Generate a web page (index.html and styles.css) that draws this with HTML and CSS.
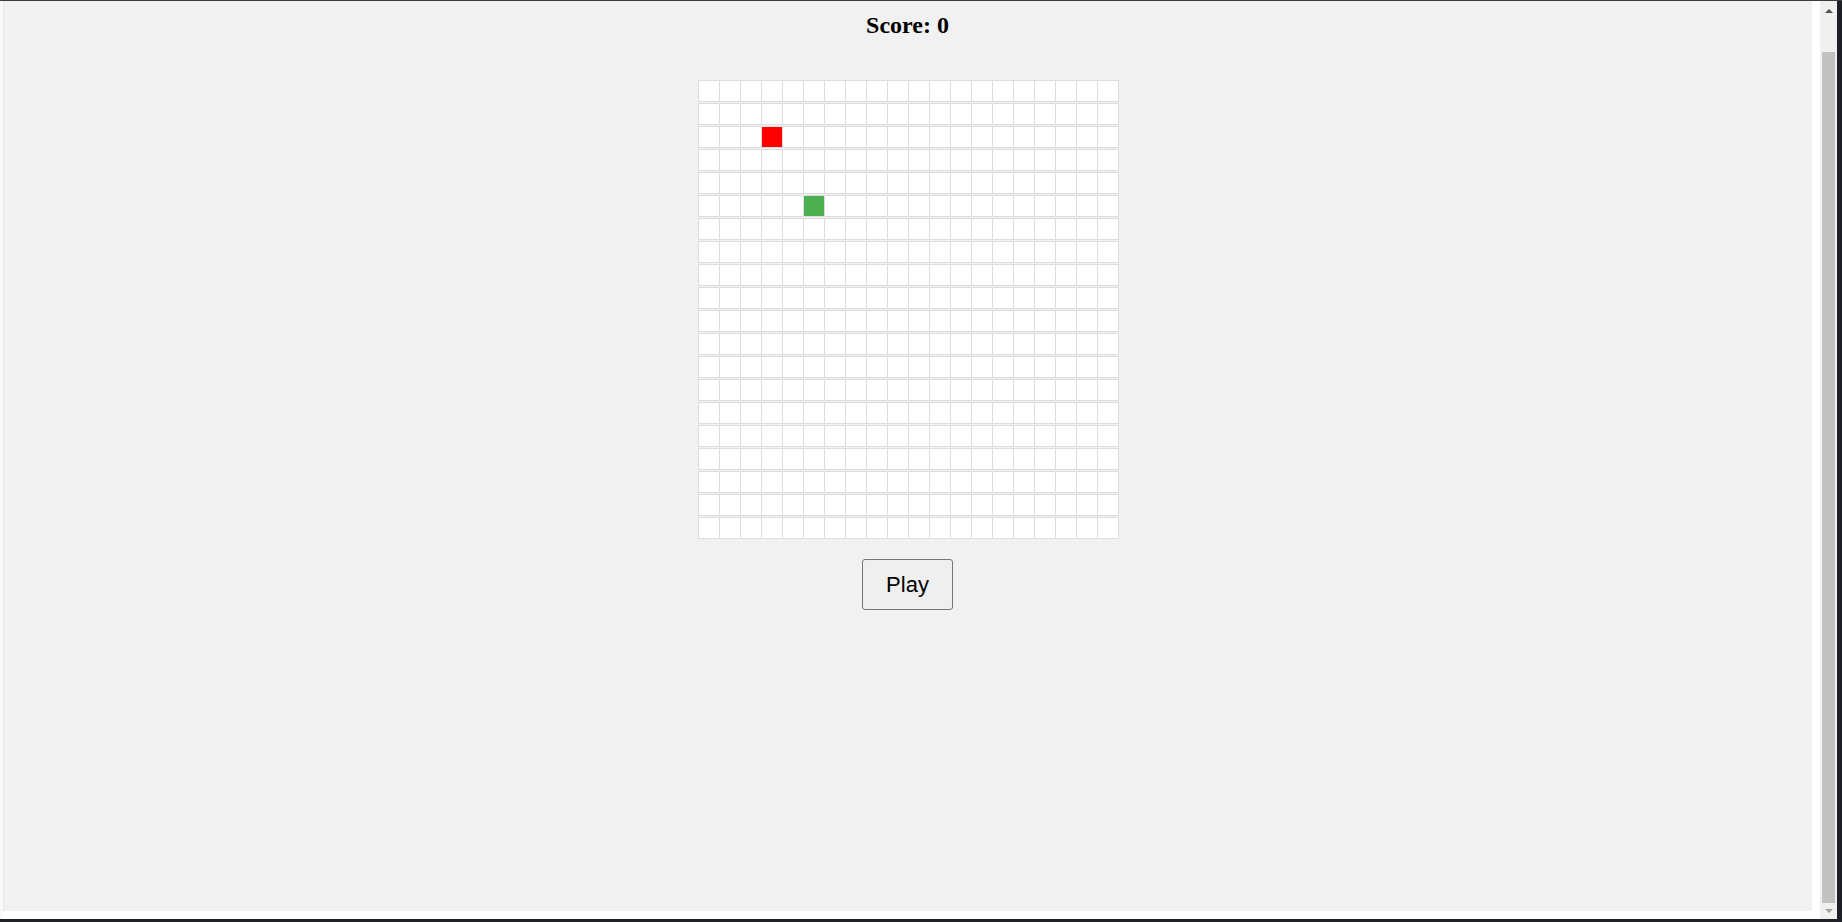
FILE: index.html
```html
<!DOCTYPE html>
<html lang="en">
<head>
<meta charset="utf-8">
<title>Snake</title>
<link rel="stylesheet" href="styles.css">
</head>
<body>
<div class="screen">
  <div class="topline"></div>
  <div class="main">
    <div class="browser">
      <div class="left-edge"></div>
      <div class="page-col">
        <div class="viewport">
          <h2 class="score">Score: 0</h2>
          <div class="board" id="board"></div>
          <button class="play">Play</button>
        </div>
        <div class="page-bottom"></div>
      </div>
      <div class="gutter"></div>
      <div class="scrollbar">
        <div class="arrow up"></div>
        <div class="track"><div class="thumb"></div></div>
        <div class="arrow down"></div>
      </div>
    </div>
    <div class="dark-right"></div>
  </div>
  <div class="bottomline"></div>
</div>
<script src="script.js"></script>
</body>
</html>
```
FILE: styles.css
```css
html, body {
  margin: 0;
  padding: 0;
}
body {
  width: 1842px;
  height: 922px;
  overflow: hidden;
  background: #1c1f24;
}
.screen {
  width: 1842px;
  height: 922px;
  display: flex;
  flex-direction: column;
}
.topline {
  height: 1px;
  background: #3c3c3c;
}
.main {
  height: 918px;
  display: flex;
}
.browser {
  width: 1837px;
  display: flex;
  background: #ffffff;
}
.left-edge {
  width: 3px;
  background: #f9f9f9;
}
.page-col {
  width: 1809px;
  display: flex;
  flex-direction: column;
}
.viewport {
  height: 910px;
  background: #f1f1f1;
  box-shadow: inset 1px 0 0 #e6e6e6;
  padding-left: 2px;
  padding-top: 10px;
  box-sizing: border-box;
  display: flex;
  flex-direction: column;
  align-items: center;
}
.page-bottom {
  flex: 1;
  background: #ffffff;
}
.gutter {
  width: 8px;
  background: #ffffff;
}
.scrollbar {
  width: 17px;
  background: #f0f0f0;
  display: flex;
  flex-direction: column;
  align-items: center;
}
.arrow {
  width: 0;
  height: 0;
  border-left: 4px solid transparent;
  border-right: 4px solid transparent;
}
.arrow.up {
  margin-top: 8px;
  border-bottom: 4px solid #505050;
}
.arrow.down {
  margin-bottom: 6px;
  border-top: 4px solid #a3a3a3;
}
.track {
  flex: 1;
  width: 100%;
  display: flex;
  flex-direction: column;
  align-items: center;
  padding-top: 39px;
  padding-bottom: 6px;
  box-sizing: border-box;
}
.thumb {
  width: 13px;
  flex: 1;
  background: #c1c1c1;
}
.dark-right {
  width: 5px;
  background: #1c1f24;
}
.bottomline {
  height: 3px;
  background: #1e2228;
}
.score {
  margin: 0 2px 41px 0;
  font-family: "Liberation Serif", "Times New Roman", serif;
  font-weight: bold;
  font-size: 24px;
  line-height: 28px;
  color: #000;
}
.board {
  display: flex;
  flex-direction: column;
  gap: 1px;
}
.row {
  display: flex;
}
.cell {
  width: 22px;
  height: 22px;
  box-sizing: border-box;
  border: 1px solid #dddddd;
  background: #ffffff;
}
.cell + .cell {
  margin-left: -1px;
}
.cell.food {
  background: #ff0000;
}
.cell.snake {
  background: #4caf50;
}
.play {
  margin: 20px 2px 0 0;
  width: 91px;
  height: 51px;
  box-sizing: border-box;
  border: 1px solid #767676;
  border-radius: 3px;
  background: #efefef;
  color: #000;
  font-family: "Liberation Sans", Arial, sans-serif;
  font-size: 22px;
  line-height: 26px;
  padding: 0;
}
```
FILE: script.js
```js
(function () {
  var board = document.getElementById('board');
  var size = 20;
  var food = { r: 2, c: 3 };
  var snake = [{ r: 5, c: 5 }];
  for (var r = 0; r < size; r++) {
    var row = document.createElement('div');
    row.className = 'row';
    for (var c = 0; c < size; c++) {
      var cell = document.createElement('div');
      cell.className = 'cell';
      if (r === food.r && c === food.c) cell.className += ' food';
      for (var i = 0; i < snake.length; i++) {
        if (snake[i].r === r && snake[i].c === c) cell.className += ' snake';
      }
      row.appendChild(cell);
    }
    board.appendChild(row);
  }
})();
```
